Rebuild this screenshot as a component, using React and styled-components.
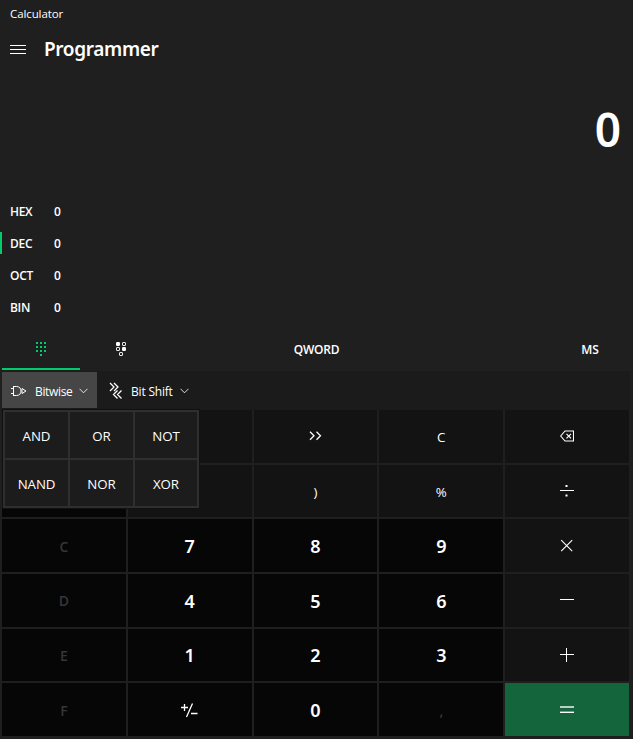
import React from 'react';
import styled, { createGlobalStyle, css } from 'styled-components';

const Global = createGlobalStyle`
  * { box-sizing: border-box; }
  body {
    margin: 0;
    background: #1f1f1f;
    color: #fff;
    font-family: "Open Sans", "Noto Sans", sans-serif;
    overflow: hidden;
  }
  button {
    font: inherit;
    color: inherit;
    border: 0;
    padding: 0;
    margin: 0;
    background: none;
  }
  svg { display: block; flex: none; }
`;

const Window = styled.div`
  width: 633px;
  height: 739px;
  display: flex;
  flex-direction: column;
  background: #1f1f1f;
`;

const TitleBar = styled.div`
  height: 28px;
  padding-left: 10px;
  font-size: 11.5px;
  line-height: 28px;
  letter-spacing: -0.1px;
`;

const NavBar = styled.header`
  height: 44px;
  display: flex;
  align-items: center;
  gap: 18px;
  padding-left: 10px;
`;

const Mode = styled.h1`
  margin: 0;
  font-family: "Noto Sans", sans-serif;
  font-size: 19px;
  font-weight: 600;
  line-height: 42px;
  height: 44px;
  letter-spacing: -0.35px;
`;

const Display = styled.div`
  height: 123px;
  padding: 27px 12px 0 0;
  text-align: right;
  font-family: "Noto Sans", sans-serif;
  font-size: 46px;
  font-weight: 600;
  line-height: 60px;
`;

const RadixList = styled.div`
  height: 135px;
`;

const RadixRow = styled.div`
  height: 32px;
  display: flex;
  align-items: center;
  font-size: 12px;
  font-weight: 600;
`;

const RadixMark = styled.span`
  width: 2px;
  height: 22px;
  margin-right: 8px;
  background: ${(p) => (p.$on ? '#00cc6a' : 'transparent')};
`;

const RadixName = styled.span`
  width: 44px;
  letter-spacing: -0.3px;
`;

const TabBar = styled.div`
  height: 41px;
  display: grid;
  grid-template-columns: 78px 80px 1fr 82px;
  gap: 1px;
  padding: 0 2px 1px 2px;
`;

const Tab = styled.button`
  display: flex;
  align-items: center;
  justify-content: center;
  padding-top: 1px;
  border-bottom: 2px solid ${(p) => (p.$on ? '#00cc6a' : 'transparent')};
  color: ${(p) => (p.$on ? '#00cc6a' : '#fff')};
  font-size: 12px;
  font-weight: 600;
  letter-spacing: -0.2px;
`;

const IconTab = styled(Tab)`
  padding-top: 0;
  padding-bottom: 1px;
`;

const WordTab = styled(Tab)`
  padding-right: 77px;
`;

const Toolbar = styled.div`
  height: 39px;
  margin: 0 3px 0 2px;
  padding: 1px 0 2px;
  display: flex;
  gap: 4px;
  background: #1b1b1b;
  position: relative;
`;

const ToolButton = styled.button`
  width: ${(p) => p.$width}px;
  display: flex;
  align-items: center;
  padding: 2px 0 0 8px;
  background: ${(p) => (p.$open ? '#464646' : 'transparent')};
  font-size: 12px;
  letter-spacing: ${(p) => (p.$open ? '-0.35px' : '-0.2px')};
`;

const ToolLabel = styled.span`
  width: ${(p) => p.$width}px;
  margin: 0 ${(p) => p.$after}px 0 8px;
  white-space: nowrap;
  text-align: left;
`;

const Flyout = styled.div`
  position: absolute;
  z-index: 2;
  left: 1px;
  top: 39px;
  width: 196px;
  height: 98px;
  padding: 2px;
  display: grid;
  grid-template-columns: 63px 63px 62px;
  grid-template-rows: 46px 46px;
  gap: 2px;
  background: #2f2f2f;
  box-shadow: 0 0 0 1px #111;
`;

const FlyoutItem = styled.button`
  background: #1c1c1c;
  font-size: 13.3px;
  letter-spacing: -0.1px;
  padding-top: 2px;
`;

const Keypad = styled.div`
  width: 627px;
  height: 326px;
  margin-left: 2px;
  display: grid;
  grid-template-columns: repeat(5, 1fr);
  grid-template-rows: repeat(6, 1fr);
  gap: 2px;
`;

const kinds = {
  digit: css`
    background: #060606;
    font-family: "Noto Sans", sans-serif;
    font-size: 18px;
    font-weight: 600;
    padding-top: 1px;
  `,
  disabled: css`
    background: #060606;
    color: #363636;
    font-size: 14px;
    font-weight: 600;
    padding-top: 1px;
  `,
  op: css`
    background: #131313;
    font-size: 13.3px;
    padding-top: 2px;
  `,
  icon: css`
    background: #131313;
  `,
  equals: css`
    background: #14643c;
  `,
};

const Key = styled.button`
  display: flex;
  align-items: center;
  justify-content: center;
  ${(p) => kinds[p.$kind]}
`;

const Icon = ({ w, h, children }) => (
  <svg width={w} height={h} viewBox={`0 0 ${w} ${h}`} fill="none" stroke="currentColor" strokeWidth="1">
    {children}
  </svg>
);

const Menu = () => (
  <Icon w={16} h={10}><path d="M0 .5h16M0 4.5h16M0 8.5h16" /></Icon>
);

const DotPad = () => (
  <Icon w={10} h={14}>
    <path d="M0 1h2m2 0h2m2 0h2M0 5h2m2 0h2m2 0h2M0 9h2m2 0h2m2 0h2M4 13h2" strokeWidth="2" />
  </Icon>
);

const BitPad = () => (
  <Icon w={10} h={14}>
    <rect width="4" height="4" rx="1.2" fill="currentColor" stroke="none" />
    <rect x="6.5" y=".5" width="3" height="3" rx=".6" />
    <rect x=".5" y="5.5" width="3" height="3" rx=".6" />
    <rect x="6" y="5" width="4" height="4" rx="1.2" fill="currentColor" stroke="none" />
    <rect x="3.5" y="10.5" width="3" height="3" rx=".6" />
  </Icon>
);

const Gate = () => (
  <Icon w={17} h={12}>
    <path d="M1 3.5h3M1 8.5h3M3.5 1v10M3.5 1.5h3c3 0 4.5 2 4.5 4.5s-1.5 4.5-4.5 4.5h-3M12 3.5v5L16 6z" />
  </Icon>
);

const Shift = () => (
  <Icon w={14} h={18}>
    <path d="M1 1l4 4-4 4M5 1l4 4-4 4M8.5 8.5l-4 4 4 4M12.5 8.5l-4 4 4 4" strokeWidth="1.25" />
  </Icon>
);

const Chevron = () => (
  <Icon w={9} h={6}><path d="M.5 .8l4 4 4-4" opacity=".85" /></Icon>
);

const Backspace = () => (
  <Icon w={14} h={12}>
    <path d="M5 1h8.5v10H5L.7 6z" strokeWidth="1.1" />
    <path d="M6.500 3.800l4.500 4.500M11 3.800L6.500 8.300" strokeWidth="1.2" />
  </Icon>
);

const Divide = () => (
  <Icon w={14} h={14}>
    <path d="M0 6.500h14" />
    <path d="M5.500 2h2M5.500 11.500h2" strokeWidth="1.800" />
  </Icon>
);
const Times = () => <Icon w={14} h={14}><path d="M1.200 1.200l11 11M12.200 1.200l-11 11" strokeWidth="1.1" /></Icon>;
const Minus = () => <Icon w={14} h={14}><path d="M0 6.500h14" /></Icon>;
const Plus = () => <Icon w={14} h={14}><path d="M0 6.500h14M6.500 0v14" /></Icon>;
const Equals = () => (
  <Icon w={14} h={14}>
    <path d="M0 4h14" strokeWidth="2" opacity=".7" />
    <path d="M0 9.500h14" />
    <path d="M0 8.500h14" opacity=".4" />
  </Icon>
);
const More = () => <Icon w={14} h={10}><path d="M2 .8l4 4-4 4M8.500 .8l4 4-4 4" strokeWidth="1.250" /></Icon>;
const Less = () => <Icon w={14} h={10}><path d="M5.500 .8l-4 4 4 4M12 .8l-4 4 4 4" /></Icon>;
const Sign = () => (
  <Icon w={17} h={15}>
    <path d="M0 4.500h7M3.500 1v7M11.500 .5L5.500 14M10 10.500h6.500" strokeWidth="1.300" />
  </Icon>
);

const radixes = ['HEX', 'DEC', 'OCT', 'BIN'];
const gates = ['AND', 'OR', 'NOT', 'NAND', 'NOR', 'XOR'];
const keys = [
  ['disabled', 'A'], ['icon', <Less />], ['icon', <More />], ['op', 'C'], ['icon', <Backspace />],
  ['disabled', 'B'], ['op', '('], ['op', ')'], ['op', '%'], ['icon', <Divide />],
  ['disabled', 'C'], ['digit', '7'], ['digit', '8'], ['digit', '9'], ['icon', <Times />],
  ['disabled', 'D'], ['digit', '4'], ['digit', '5'], ['digit', '6'], ['icon', <Minus />],
  ['disabled', 'E'], ['digit', '1'], ['digit', '2'], ['digit', '3'], ['icon', <Plus />],
  ['disabled', 'F'], ['digit', <Sign />], ['digit', '0'], ['disabled', ','], ['equals', <Equals />],
];

export default function App() {
  return (
    <Window>
      <Global />
      <TitleBar>Calculator</TitleBar>
      <NavBar>
        <Menu />
        <Mode>Programmer</Mode>
      </NavBar>
      <Display>0</Display>
      <RadixList>
        {radixes.map((name) => (
          <RadixRow key={name}>
            <RadixMark $on={name === 'DEC'} />
            <RadixName>{name}</RadixName>
            <span>0</span>
          </RadixRow>
        ))}
      </RadixList>
      <TabBar>
        <IconTab $on><DotPad /></IconTab>
        <IconTab><BitPad /></IconTab>
        <WordTab>QWORD</WordTab>
        <Tab>MS</Tab>
      </TabBar>
      <Toolbar>
        <ToolButton $width={95} $open>
          <Gate />
          <ToolLabel $width={37} $after={7}>Bitwise</ToolLabel>
          <Chevron />
        </ToolButton>
        <ToolButton $width={97}>
          <Shift />
          <ToolLabel $width={42} $after={7}>Bit Shift</ToolLabel>
          <Chevron />
        </ToolButton>
        <Flyout>
          {gates.map((g) => <FlyoutItem key={g}>{g}</FlyoutItem>)}
        </Flyout>
      </Toolbar>
      <Keypad>
        {keys.map(([kind, label], i) => <Key key={i} $kind={kind}>{label}</Key>)}
      </Keypad>
    </Window>
  );
}
